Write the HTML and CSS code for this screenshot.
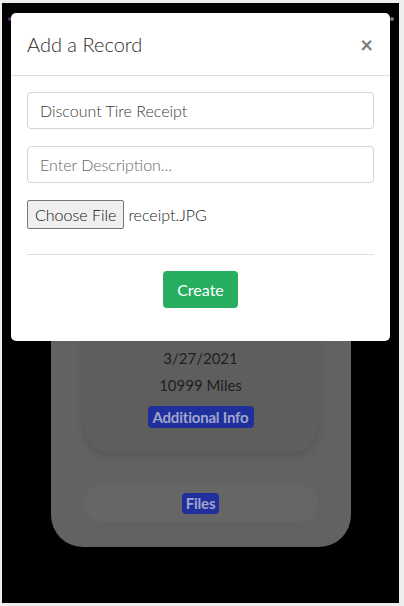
FILE: index.html
```html
<!DOCTYPE html>
<html>
<head>
<meta charset="utf-8">
<link rel="stylesheet" href="styles.css">
</head>
<body>
<div class="frame">
  <div class="topbar"><span class="dot dot-purple"></span><span class="dot dot-gray"></span></div>
  <div class="card">
    <div class="inner">
      <div class="line">3/27/2021</div>
      <div class="line miles">10999 Miles</div>
      <div class="badge-row"><span class="badge">Additional Info</span></div>
    </div>
    <div class="files"><span class="badge">Files</span></div>
  </div>
</div>

<div class="modal">
  <div class="modal-header">
    <h2 class="modal-title">Add a Record</h2>
    <span class="close">&times;</span>
  </div>
  <div class="modal-body">
    <div class="field">Discount Tire Receipt</div>
    <div class="field placeholder">Enter Description...</div>
    <div class="file-row"><span class="file-btn">Choose File</span><span class="file-name">receipt.JPG</span></div>
    <div class="divider"></div>
    <div class="actions"><span class="create">Create</span></div>
  </div>
</div>
</body>
</html>
```

FILE: styles.css
```css
html, body {
  margin: 0;
  padding: 0;
}
body {
  width: 404px;
  height: 606px;
  background: #eeeeee;
  padding: 3px 5px 3px 2px;
  box-sizing: border-box;
  font-family: Lato, "Open Sans", sans-serif;
  position: relative;
  overflow: hidden;
}
.frame {
  background: #000;
  height: 600px;
  display: flex;
  flex-direction: column;
}
.topbar {
  display: flex;
  justify-content: space-between;
  padding: 14px 5px 0 6px;
  height: 3px;
}
.dot {
  width: 4px;
  height: 4px;
  border-radius: 50%;
}
.dot-purple { background: #5a2a6a; }
.dot-gray { background: #777; }
.card {
  margin: 130px auto 0;
  width: 300px;
  background: #626262;
  border-radius: 32px;
  padding: 33px 33px 25px;
  box-sizing: border-box;
  display: flex;
  flex-direction: column;
  align-items: stretch;
}
.inner {
  background: #5e5e5e;
  border-radius: 26px;
  padding: 164px 0 25px;
  box-shadow: 0 2px 8px rgba(0,0,0,0.15);
  display: flex;
  flex-direction: column;
  align-items: center;
}
.line {
  font-size: 15px;
  line-height: 22px;
  color: #1f1f1f;
  font-weight: 400;
}
.miles { margin-top: 5px; }
.badge-row { margin-top: 10px; }
.badge {
  display: inline-block;
  background: #1f2f9c;
  color: #a0a5cc;
  border-radius: 4px;
  font-size: 15px;
  font-weight: 700;
  line-height: 22px;
  padding: 0 5px;
  letter-spacing: -0.2px;
}
.files {
  margin-top: 32px;
  height: 37px;
  background: #666666;
  border-radius: 19px;
  display: flex;
  align-items: center;
  justify-content: center;
}
.files .badge { line-height: 21px; padding: 0 4px; }

.modal {
  position: absolute;
  left: 11px;
  top: 13px;
  width: 379px;
  height: 328px;
  background: #fff;
  border-radius: 5px;
  box-sizing: border-box;
}
.modal-header {
  height: 62px;
  border-bottom: 1px solid #dedede;
  display: flex;
  align-items: center;
  justify-content: space-between;
  padding: 0 16px;
}
.modal-title {
  margin: 0;
  font-size: 20px;
  font-weight: 300;
  color: #2b2b2b;
}
.close {
  font-size: 22px;
  color: #7a7a7a;
  font-weight: 700;
  margin-right: 1px;
}
.modal-body {
  padding: 16px 16px 0;
  display: flex;
  flex-direction: column;
}
.field {
  height: 37px;
  border: 1px solid #d4d4d4;
  border-radius: 4px;
  box-sizing: border-box;
  padding: 0 12px;
  display: flex;
  align-items: center;
  font-size: 16px;
  font-weight: 300;
  color: #3a3a3a;
  margin-bottom: 17px;
}
.placeholder { color: #666; }
.file-row {
  display: flex;
  align-items: center;
  height: 29px;
}
.file-btn {
  height: 29px;
  box-sizing: border-box;
  border: 1px solid #767676;
  border-radius: 2px;
  background: #efefef;
  padding: 0 7px;
  display: flex;
  align-items: center;
  font-size: 16px;
  font-weight: 300;
  color: #111;
}
.file-name {
  margin-left: 4px;
  font-size: 16px;
  font-weight: 300;
  color: #222;
}
.divider {
  margin-top: 25px;
  border-top: 1px solid #dedede;
}
.actions {
  display: flex;
  justify-content: center;
  margin-top: 16px;
}
.create {
  background: #27ae60;
  color: #fff;
  font-size: 16px;
  height: 37px;
  padding: 0 14px;
  border-radius: 4px;
  display: flex;
  align-items: center;
}
```
